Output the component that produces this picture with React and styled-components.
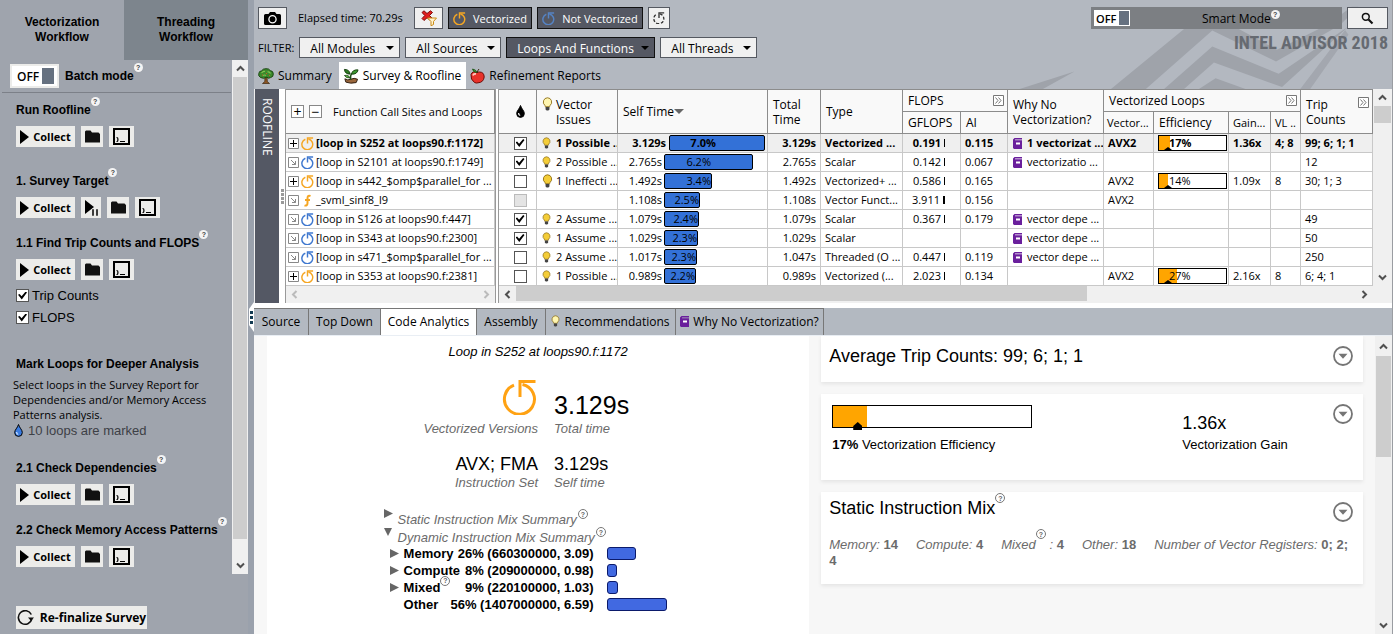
import { useState } from "react";
import styled, { createGlobalStyle, css } from "styled-components";

const UI_FONT = `"Open Sans", "Noto Sans", sans-serif`;
const DOC_FONT = `"Liberation Sans", Arial, sans-serif`;

const ORANGE = "#f5a623";
const BLUE = "#3f78cf";

const ROWS = [
  { name: "[loop in S252 at loops90.f:1172]", kind: "vector", open: true, check: "on", issue: "1 Possible ..", self: "3.129s", pct: "7.0%", bar: 96, total: "3.129s", type: "Vectorized ...", gflops: "0.191", ai: "0.115", why: "1 vectorizat ...", isa: "AVX2", eff: 17, gain: "1.36x", vl: "4; 8", trips: "99; 6; 1; 1" },
  { name: "[loop in S2101 at loops90.f:1749]", kind: "scalar", check: "on", issue: "2 Possible ...", self: "2.765s", pct: "6.2%", bar: 89, total: "2.765s", type: "Scalar", gflops: "0.142", ai: "0.067", why: "vectorizatio ...", trips: "12" },
  { name: "[loop in s442_$omp$parallel_for ...", kind: "vector", open: true, check: "off", issue: "1 Ineffecti ...", self: "1.492s", pct: "3.4%", bar: 48, total: "1.492s", type: "Vectorized+ ...", gflops: "0.586", ai: "0.165", isa: "AVX2", eff: 14, gain: "1.09x", vl: "8", trips: "30; 1; 3" },
  { name: "_svml_sinf8_l9", kind: "func", check: "disabled", self: "1.108s", pct: "2.5%", bar: 36, total: "1.108s", type: "Vector Funct...", gflops: "3.911", ai: "0.156", isa: "AVX2" },
  { name: "[loop in S126 at loops90.f:447]", kind: "scalar", check: "on", issue: "2 Assume ...", self: "1.079s", pct: "2.4%", bar: 35, total: "1.079s", type: "Scalar", gflops: "0.367", ai: "0.179", why: "vector depe ...", trips: "49" },
  { name: "[loop in S343 at loops90.f:2300]", kind: "scalar", check: "on", issue: "1 Assume ...", self: "1.029s", pct: "2.3%", bar: 34, total: "1.029s", type: "Scalar", why: "vector depe ...", trips: "50" },
  { name: "[loop in s471_$omp$parallel_for ...", kind: "scalar", check: "off", issue: "2 Assume ...", self: "1.017s", pct: "2.3%", bar: 33, total: "1.047s", type: "Threaded (O ...", gflops: "0.447", ai: "0.119", why: "vector depe ...", trips: "250" },
  { name: "[loop in S353 at loops90.f:2381]", kind: "vector", open: true, check: "off", issue: "1 Possible ...", self: "0.989s", pct: "2.2%", bar: 32, total: "0.989s", type: "Vectorized (...", gflops: "2.023", ai: "0.134", isa: "AVX2", eff: 27, gain: "2.16x", vl: "8", trips: "6; 4; 1" },
];

const COLUMNS = [38, 81, 150, 53, 82, 58, 47, 96, 50, 75, 42, 30];

const MIX = [
  { name: "Memory", value: "26% (660300000, 3.09)", bar: 29, more: true },
  { name: "Compute", value: "8% (209000000, 0.98)", bar: 10, more: true },
  { name: "Mixed", value: "9% (220100000, 1.03)", bar: 11, more: true, help: true },
  { name: "Other", value: "56% (1407000000, 6.59)", bar: 60 },
];

/* icons */

const LoopIcon = ({ size = 13, color = ORANGE, width = 3, dashed }) => (
  <svg width={size} height={size} viewBox="0 0 35 36" fill="none" stroke={color} strokeWidth={width}>
    <path d="M20 5.5 A15 15 0 1 1 11.5 6.2" strokeDasharray={dashed ? "9 5" : undefined} />
    <path d="M17.5 18 V2.5 H33" />
  </svg>
);

const FuncIcon = () => (
  <svg width="13" height="13" viewBox="0 0 13 13" fill="none" stroke={ORANGE} strokeWidth="2">
    <path d="M9.5 2 C7 1 6.5 2.5 6.5 4.5 V9 C6.5 11.5 5 12 3.5 11.3 M4 6 H9" />
  </svg>
);

const BulbIcon = ({ big, lit }) => (
  <svg width={big ? 11 : 9} height={big ? 14 : 12} viewBox="0 0 10 13">
    <path d="M5 .7 A4 4 0 0 1 7.4 7.8 L7 9 H3 L2.6 7.8 A4 4 0 0 1 5 .7z" fill={lit ? "#fff6b0" : "#f4cd38"} stroke="#8a6a10" strokeWidth=".8" />
    <path d="M3.2 9.3 H6.8 V11.5 L5.8 12.6 H4.2 L3.2 11.5z" fill="#444" />
  </svg>
);

const BookIcon = () => (
  <svg width="9" height="11" viewBox="0 0 9 11">
    <path d="M1.5 0 H9 V1.5 H2 V2.3 H9 V11 H1 L0 10 V1.5z" fill="#6a1f9c" />
    <path d="M3 4.5 H7 V6.5 H3z" fill="#fff" />
  </svg>
);

const DropIcon = ({ color = "#000", shine }) => (
  <svg width="9" height="13" viewBox="0 0 9 13">
    <path d="M4.5 .5 C5.5 4 8.3 5.7 8.3 8.6 A3.8 3.8 0 0 1 .7 8.6 C.7 5.7 3.5 4 4.5 .5z" fill={color} stroke="#000" />
    <path d="M2.6 8 C2.5 9.5 3.3 10.3 4.2 10.5" fill="none" stroke={shine || "#fff"} strokeWidth="1.2" />
  </svg>
);

const PlayIcon = () => (
  <svg width="9" height="14" viewBox="0 0 9 14"><path d="M0 0 L9 7 L0 14z" /></svg>
);

const PlayPauseIcon = () => (
  <svg width="13" height="16" viewBox="0 0 13 16">
    <path d="M0 0 L9 7 L0 14z" />
    <path d="M7 9 H9 V16 H7z M11 9 H13 V16 H11z" stroke="#ececea" strokeWidth=".5" />
  </svg>
);

const FolderIcon = () => (
  <svg width="15" height="13" viewBox="0 0 15 13"><path d="M0 1.5 L1 .5 H5.5 L7 2.5 H13.5 L15 4 V12.5 H0z" fill="#111" /></svg>
);

const TerminalIcon = () => (
  <svg width="17" height="17" viewBox="0 0 17 17" fill="none" stroke="#000">
    <path d="M1 1 H16 V16 H1z" strokeWidth="2" />
    <path d="M3.5 9.5 Q5 9.5 4.8 11 Q5.2 11.5 4.8 12 Q5 13.5 3.5 13.5 M7 13.5 H12" strokeWidth="1.2" />
  </svg>
);

const RefreshIcon = () => (
  <svg width="17" height="16" viewBox="0 0 17 16">
    <path d="M14.3 4.5 A6.8 6.8 0 1 0 14.8 9" fill="none" stroke="#111" strokeWidth="1.6" />
    <path d="M11 7.5 H17 L14 11z" fill="#111" />
  </svg>
);

const CameraIcon = () => (
  <svg width="17" height="13" viewBox="0 0 17 13">
    <path d="M1.5 2 H4.5 L6 0 H11 L12.5 2 H15.5 Q17 2 17 3.5 V11.5 Q17 13 15.5 13 H1.5 Q0 13 0 11.5 V3.5 Q0 2 1.5 2z" />
    <circle cx="8.5" cy="7.2" r="3.6" fill="none" stroke="#fff" strokeWidth="1.3" />
  </svg>
);

const ClearFilterIcon = () => (
  <svg width="16" height="16" viewBox="0 0 16 16">
    <path d="M1 2.5 L3 .8 L6 3.5 L9.5 .8 L11.5 2.5 L8.5 5.5 L11.5 8.5 L9.5 10.5 L6 7.8 L3 10.5 L1 8.5 L3.8 5.5z" fill="#e01f1f" stroke="#7d0b0b" />
    <path d="M6.5 8 H15.5 L12.5 11.5 V14.5 L10 15.8 V11.5z" fill="#fff3cf" stroke="#c98a17" />
  </svg>
);

const SearchIcon = () => (
  <svg width="13" height="13" viewBox="0 0 13 13" fill="none" stroke="#111">
    <circle cx="4.8" cy="4.8" r="3.4" strokeWidth="1.5" />
    <path d="M7.5 7.5 L11.5 11.5" strokeWidth="2.2" />
  </svg>
);

const TreeIcon = () => (
  <svg width="16" height="16" viewBox="0 0 16 16">
    <path d="M7 8 H9 L9.3 13.5 L11.5 15.5 H4.5 L6.8 13.5z" fill="#8b5523" stroke="#3d2610" strokeWidth=".7" />
    <path d="M2.5 9.5 Q0 8 .8 5.5 Q1 3 3.6 2.8 Q5 .5 8 .7 Q11 .4 12.2 2.6 Q15.4 3 15.3 6 Q15.5 9 12.5 9.6 Q10.5 11 8.8 9.2 Q5.5 11.3 2.5 9.5z" fill="#3c8a2c" stroke="#16400f" strokeWidth=".9" />
    <path d="M3.5 5 Q5 3 7 3.5 M9.5 4 Q11.5 3.5 12.5 5.5 M5 7.5 Q6.5 6.5 8 7.5" fill="none" stroke="#82c552" strokeWidth="1.2" />
    <path d="M4 7 h1 M8 5.5 h1 M11 7.5 h1" stroke="#c4572c" strokeWidth="1.2" />
  </svg>
);

const SproutIcon = () => (
  <svg width="16" height="16" viewBox="0 0 17 16">
    <path d="M2 11 Q5 13 8 11.5 Q12 9.5 15.5 11.5 L14 15 Q8 16.5 3 14.5z" fill="#9a673d" stroke="#2b1a0c" />
    <path d="M8 12 Q7.5 8 9 5.5" fill="none" stroke="#1f4d17" strokeWidth="1.6" />
    <path d="M9 6 Q10 1 16 1.5 Q15 6.5 9 6z" fill="#3f9a31" stroke="#123b0c" />
    <path d="M7.5 6 Q7 1 1.5 1 Q2 6 7.5 6z" fill="#2f7d25" stroke="#123b0c" />
    <path d="M7.5 10 Q3 10.5 1.5 7.5 Q6 6.5 7.5 10z" fill="#57ad3f" stroke="#123b0c" strokeWidth=".8" />
  </svg>
);

const AppleIcon = () => (
  <svg width="15" height="16" viewBox="0 0 15 16">
    <path d="M7 4.5 Q2.5 2.5 1 6.5 Q.3 11.5 4.5 14.5 Q6.5 15.5 8 14.8 Q13.5 14.5 14.2 9 Q14 4 9.5 4 Q8 4 7 4.5z" fill="#e8322a" stroke="#6e0e0a" />
    <path d="M3 7.5 Q3.5 5.5 6 6" fill="none" stroke="#ffc9c0" strokeWidth="1.8" />
    <path d="M7 4.5 Q6 1.5 2.5 1 Q3 4.5 7 4.5z" fill="#45a034" stroke="#174a10" strokeWidth=".8" />
    <path d="M7.2 5 Q7.5 2.5 9 1" fill="none" stroke="#3d2610" />
  </svg>
);

const Chevron = ({ dir = "up", color = "#505050" }) => {
  const angle = { up: 0, right: 90, down: 180, left: 270 }[dir];
  return (
    <svg width="9" height="9" viewBox="0 0 9 9" fill="none" stroke={color} strokeWidth="2">
      <path d="M1 6.5 L4.5 3 L8 6.5" transform={`rotate(${angle} 4.5 4.5)`} />
    </svg>
  );
};

const Caret = ({ color = "#000", size = 8 }) => (
  <svg width={size} height={size / 2} viewBox="0 0 8 4"><path d="M0 0 H8 L4 4z" fill={color} /></svg>
);

const ExpandIcon = () => (
  <svg width="11" height="11" viewBox="0 0 11 11" fill="none" stroke="#777">
    <path d="M.5 .5 H10.5 V10.5 H.5z" fill="#fff" />
    <path d="M2.5 2.5 L5 5.5 L2.5 8.5 M5.5 2.5 L8 5.5 L5.5 8.5" />
  </svg>
);

const RowToggleIcon = ({ open }) => (
  <svg width="11" height="11" viewBox="0 0 11 11" fill="none" stroke={open ? "#000" : "#888"}>
    <path d="M.5 .5 H10.5 V10.5 H.5z" fill="#fff" stroke="#888" />
    {open ? <path d="M2 5.5 H9 M5.5 2 V9" /> : <path d="M3 3 L7.5 7.5 M7.5 4 V7.5 H4" />}
  </svg>
);

const CircleDown = () => (
  <svg width="20" height="20" viewBox="0 0 20 20">
    <circle cx="10" cy="10" r="9" fill="#fff" stroke="#757575" strokeWidth="1.8" />
    <path d="M5.5 7.8 H14.5 L10 12.8z" fill="#757575" />
  </svg>
);

const Disclosure = ({ open }) => (
  <svg width="9" height="9" viewBox="0 0 9 9"><path d={open ? "M0 1 H8 L4 9z" : "M0 0 L9 4.5 L0 9z"} fill="#666" /></svg>
);

const Backdrop = () => (
  <BackdropSvg width="393" height="89" viewBox="0 0 1179 268" fill="#9fa3aa">
    <path d="M335 268 L555 87 L620 50 L720 87 L835 150 L985 75 L1060 20 L1080 20 L1025 75 L832 185 L640 92 L440 268z" />
    <path d="M495 268 L640 140 L840 222 L1050 80 L850 262 L645 188 L555 268z" />
    <path d="M600 268 L650 236 L740 268z" />
    <path d="M905 268 L1040 90 L1050 105 L935 268z" opacity=".8" />
    <path d="M60 268 L225 215 L130 268z" />
  </BackdropSvg>
);

const Help = ({ outline }) => <HelpMark $outline={outline}>?</HelpMark>;

/* left workflow */

const CollectRow = ({ pause }) => (
  <Actions>
    <CollectButton type="button"><PlayIcon />Collect</CollectButton>
    {pause && <SquareButton type="button" aria-label="Start paused" $w={20}><PlayPauseIcon /></SquareButton>}
    <SquareButton type="button" aria-label="Open folder" $w={22}><FolderIcon /></SquareButton>
    <SquareButton type="button" aria-label="Command line" $w={25}><TerminalIcon /></SquareButton>
  </Actions>
);

const Step = ({ title, pause, gap, children }) => (
  <StepWrap $gap={gap}>
    <StepTitle>{title}<Help /></StepTitle>
    <CollectRow pause={pause} />
    {children}
  </StepWrap>
);

const Workflow = () => (
  <Sidebar>
    <FlowTabs>
      <FlowTab type="button" $active>Vectorization<br />Workflow</FlowTab>
      <FlowTab type="button">Threading<br />Workflow</FlowTab>
    </FlowTabs>
    <FlowBody>
      <FlowContent>
        <Batch>
          <Toggle type="button" role="switch" aria-checked="false" aria-label="Batch mode">OFF<i /></Toggle>
          <StepTitle>Batch mode<Help /></StepTitle>
        </Batch>
        <Step title="Run Roofline" gap={9} />
        <Step title="1. Survey Target" gap={26} pause />
        <Step title="1.1 Find Trip Counts and FLOPS" gap={17}>
          <CheckLabel><Check defaultChecked />Trip Counts</CheckLabel>
          <CheckLabel><Check defaultChecked />FLOPS</CheckLabel>
        </Step>
        <StepWrap $gap={32}>
          <StepTitle>Mark Loops for Deeper Analysis</StepTitle>
          <Hint>Select loops in the Survey Report for Dependencies and/or Memory Access Patterns analysis.</Hint>
          <Marked><DropIcon color="#3a7be0" shine="#cfe4ff" />10 loops are marked</Marked>
        </StepWrap>
        <Step title="2.1 Check Dependencies" gap={21} />
        <Step title="2.2 Check Memory Access Patterns" gap={17} />
      </FlowContent>
      <VScroll $w={16}>
        <ScrollEnd><Chevron dir="up" /></ScrollEnd>
        <VThumb $grow />
        <ScrollEnd><Chevron dir="down" /></ScrollEnd>
      </VScroll>
    </FlowBody>
    <FlowFooter>
      <CollectButton type="button" $wide><RefreshIcon />Re-finalize Survey</CollectButton>
    </FlowFooter>
  </Sidebar>
);

/* toolbar */

const Filter = ({ label, width, dark }) => (
  <FilterWrap $w={width} $dark={dark}>
    <select aria-label={label}><option>{label}</option></select>
    <Caret />
  </FilterWrap>
);

const Toolbar = () => (
  <Top>
    <Backdrop />
    <ToolRow>
      <ToolButton type="button" aria-label="Snapshot" $w={29}><CameraIcon /></ToolButton>
      <Elapsed>Elapsed time: 70.29s</Elapsed>
      <ToolButton type="button" aria-label="Clear filters" $w={29}><ClearFilterIcon /></ToolButton>
      <ToolButton type="button" $dark $w={84}><LoopIcon width={4} />Vectorized</ToolButton>
      <ToolButton type="button" $dark $w={106}><LoopIcon width={4} color="#5583c4" />Not Vectorized</ToolButton>
      <ToolButton type="button" aria-label="All loops" $w={22}><LoopIcon size={12} color="#333" width={4} dashed /></ToolButton>
      <SmartMode>
        <Toggle type="button" role="switch" aria-checked="false" aria-label="Smart mode" $small>OFF<i /></Toggle>
        <span>Smart Mode<Help /></span>
      </SmartMode>
      <ToolButton type="button" aria-label="Search" $w={41}><SearchIcon /></ToolButton>
    </ToolRow>
    <FilterRow>
      <span>FILTER:</span>
      <Filter label="All Modules" width={101} />
      <Filter label="All Sources" width={96} />
      <Filter label="Loops And Functions" width={149} dark />
      <Filter label="All Threads" width={97} />
      <Brand>INTEL ADVISOR 2018</Brand>
    </FilterRow>
    <ViewTabs>
      <ViewTab type="button"><TreeIcon />Summary</ViewTab>
      <ViewTab type="button" $active><SproutIcon />Survey &amp; Roofline</ViewTab>
      <ViewTab type="button"><AppleIcon />Refinement Reports</ViewTab>
    </ViewTabs>
  </Top>
);

/* survey grid */

const KindIcon = ({ kind }) => {
  if (kind === "func") return <FuncIcon />;
  return <LoopIcon width={4} color={kind === "vector" ? ORANGE : BLUE} />;
};

const SitesPane = () => (
  <Sites>
    <Table>
      <thead>
        <tr>
          <Th $tall>
            <SitesHead>
              <MiniButton type="button" aria-label="Expand all">+</MiniButton>
              <MiniButton type="button" aria-label="Collapse all">−</MiniButton>
              <span>Function Call Sites and Loops</span>
            </SitesHead>
          </Th>
        </tr>
      </thead>
      <tbody>
        {ROWS.map((row, i) => (
          <Tr key={row.name} $selected={i === 0}>
            <Td $pad={2}>
              <Inline $gap={2}><RowToggleIcon open={row.open} /><KindIcon kind={row.kind} /><span>{row.name}</span></Inline>
            </Td>
          </Tr>
        ))}
      </tbody>
    </Table>
    <HScroll>
      <HEnd><Chevron dir="left" color="#bbb" /></HEnd>
      <Space />
      <HEnd><Chevron dir="right" color="#bbb" /></HEnd>
    </HScroll>
  </Sites>
);

const MetricsPane = () => (
  <Metrics>
    <MetricsBody>
      <Table>
        <colgroup>
          {COLUMNS.map((w, i) => <Col key={i} $w={w} />)}
          <col />
        </colgroup>
        <thead>
          <tr>
            <Th rowSpan="2" aria-label="Marked"><Inline $center><DropIcon /></Inline></Th>
            <Th rowSpan="2"><Inline $gap={3} $top><BulbIcon big lit /><span>Vector<br />Issues</span></Inline></Th>
            <Th rowSpan="2"><Inline>Self Time<Caret color="#666" size={10} /></Inline></Th>
            <Th rowSpan="2">Total<br />Time</Th>
            <Th rowSpan="2">Type</Th>
            <Th colSpan="2"><Spread>FLOPS<ExpandIcon /></Spread></Th>
            <Th rowSpan="2">Why No<br />Vectorization?</Th>
            <Th colSpan="4"><Spread>Vectorized Loops<ExpandIcon /></Spread></Th>
            <Th rowSpan="2"><Spread $top>Trip<br />Counts<ExpandIcon /></Spread></Th>
          </tr>
          <tr>
            <Th>GFLOPS</Th>
            <Th>AI</Th>
            <Th $pad={3}>Vector...</Th>
            <Th>Efficiency</Th>
            <Th $pad={4}>Gain...</Th>
            <Th $pad={4}>VL ..</Th>
          </tr>
        </thead>
        <tbody>
          {ROWS.map((row, i) => (
            <Tr key={row.name} $selected={i === 0}>
              <Td><Inline $center><Check defaultChecked={row.check === "on"} disabled={row.check === "disabled"} aria-label={`Mark ${row.name}`} /></Inline></Td>
              <Td>{row.issue && <Inline $gap={i === 2 ? 3 : 5}><BulbIcon big={i === 2} />{row.issue}</Inline>}</Td>
              <Td $pad={0}>
                <SelfTime>
                  <SelfValue $bold={i === 0}>{row.self}</SelfValue>
                  <TimeBar style={{ width: row.bar }}><span>{row.pct}</span></TimeBar>
                </SelfTime>
              </Td>
              <Td $right>{row.total}</Td>
              <Td $pad={4}>{row.type}</Td>
              <Td>{row.gflops && <Inline $gap={3} $end>{row.gflops}<Tick $wide={i === 3} /></Inline>}</Td>
              <Td $pad={4}>{row.ai}</Td>
              <Td>{row.why && <Inline $gap={5}><BookIcon />{row.why}</Inline>}</Td>
              <Td $pad={4}>{row.isa}</Td>
              <Td $pad={4}>
                {row.eff && (
                  <EffBar><i style={{ width: `${row.eff}%` }} /><b /><span>{row.eff}%</span></EffBar>
                )}
              </Td>
              <Td $pad={4}>{row.gain}</Td>
              <Td $pad={4}>{row.vl}</Td>
              <Td $pad={4}>{row.trips}</Td>
            </Tr>
          ))}
        </tbody>
      </Table>
      <VScroll $w={19}>
        <ScrollEnd><Chevron dir="up" /></ScrollEnd>
        <VThumb $h={17} />
        <Space />
        <ScrollEnd><Chevron dir="down" /></ScrollEnd>
      </VScroll>
    </MetricsBody>
    <HScroll>
      <HEnd><Chevron dir="left" /></HEnd>
      <HTrack><HThumb /></HTrack>
      <HEnd $wide><Chevron dir="right" /></HEnd>
    </HScroll>
  </Metrics>
);

/* code analytics */

const TABS = [
  { label: "Source", width: 55 },
  { label: "Top Down", width: 72 },
  { label: "Code Analytics", width: 96 },
  { label: "Assembly", width: 69 },
  { label: "Recommendations", width: 130, icon: <BulbIcon lit /> },
  { label: "Why No Vectorization?", width: 148, icon: <BookIcon /> },
];

const Analytics = () => (
  <Doc>
    <Gutter />
    <LoopPanel>
      <LoopTitle>Loop in S252 at loops90.f:1172</LoopTitle>
      <Stats>
        <Stat $right $first><LoopIcon size={36} width={3} color="#ffa213" /><em>Vectorized Versions</em></Stat>
        <Stat $first $big><strong>3.129s</strong><em>Total time</em></Stat>
        <Stat $right><strong>AVX; FMA</strong><em>Instruction Set</em></Stat>
        <Stat><strong>3.129s</strong><em>Self time</em></Stat>
      </Stats>
      <Mix>
        <MixHead><Disclosure /><span>Static Instruction Mix Summary</span><Help outline /></MixHead>
        <MixHead><Disclosure open /><span>Dynamic Instruction Mix Summary</span><Help outline /></MixHead>
        {MIX.map((m) => (
          <MixRow key={m.name}>
            <MixText>
              <MixArrow>{m.more && <Disclosure />}</MixArrow>
              <MixName>{m.name}{m.help && <Help outline />}</MixName>
              <span>{m.value}</span>
            </MixText>
            <MixBar style={{ width: m.bar }} />
          </MixRow>
        ))}
      </Mix>
    </LoopPanel>
    <Cards>
      <Card $h={46}>
        <CardTitle>Average Trip Counts: 99; 6; 1; 1</CardTitle>
        <RoundButton type="button" aria-label="Expand trip counts"><CircleDown /></RoundButton>
      </Card>
      <Card $h={86}>
        <Efficiency>
          <BigBar><i /><b /></BigBar>
          <p><b>17%</b> Vectorization Efficiency</p>
        </Efficiency>
        <Gain><strong>1.36x</strong><span>Vectorization Gain</span></Gain>
        <RoundButton type="button" aria-label="Expand efficiency"><CircleDown /></RoundButton>
      </Card>
      <Card $h={92} $tight>
        <MixCardBody>
          <CardTitle>Static Instruction Mix<Help outline /></CardTitle>
          <MixLine>
            <span><em>Memory:</em> <b>14</b></span>
            <span><em>Compute:</em> <b>4</b></span>
            <span><em>Mixed</em><Help outline /><em> :</em> <b>4</b></span>
            <span><em>Other:</em> <b>18</b></span>
            <em>Number of Vector Registers:</em> <b>0; 2;</b> <b>4</b>
          </MixLine>
        </MixCardBody>
        <RoundButton type="button" aria-label="Expand instruction mix" $low><CircleDown /></RoundButton>
      </Card>
    </Cards>
    <VScroll $w={17}>
      <ScrollEnd $tall><Chevron dir="up" /></ScrollEnd>
      <VThumb $h={101} />
      <Space />
      <ScrollEnd><Chevron dir="down" /></ScrollEnd>
    </VScroll>
  </Doc>
);

const App = () => {
  const [activeTab, setActiveTab] = useState("Code Analytics");

  return (
    <Page>
      <GlobalStyle />
      <Workflow />
      <Splitter>
        <svg width="6" height="30" viewBox="0 0 6 30">
          <path d="M6 0 L1 7 V23 L6 30z" fill="#fff" />
          <path d="M2 9 H5 V12 H2z M2 14 H5 V17 H2z M2 19 H5 V22 H2z" fill="#123a52" />
        </svg>
      </Splitter>
      <Main>
        <Toolbar />
        <Survey>
          <Roofline type="button">ROOFLINE</Roofline>
          <Grip><i /><i /><i /><i /></Grip>
          <SitesPane />
          <Divider />
          <MetricsPane />
        </Survey>
        <DocTabs>
          {TABS.map((tab) => (
            <DocTab key={tab.label} type="button" $w={tab.width} $active={tab.label === activeTab} onClick={() => setActiveTab(tab.label)}>
              {tab.icon}
              {tab.label}
            </DocTab>
          ))}
        </DocTabs>
        <Analytics />
      </Main>
    </Page>
  );
};

export default App;

const GlobalStyle = createGlobalStyle`
  * {
    box-sizing: border-box;
  }

  body {
    margin: 0;
    background: #fff;
    color: #000;
    font-family: ${UI_FONT};
    font-size: 12px;
    line-height: 15px;
  }

  button, select, input {
    margin: 0;
    padding: 0;
    border: 0;
    font: inherit;
    color: inherit;
  }

  svg {
    flex: none;
    display: block;
  }
`;

const Page = styled.div`
  display: flex;
  height: 100vh;
  min-height: 634px;
  overflow: hidden;
`;

const HelpMark = styled.sup`
  flex: none;
  display: inline-flex;
  align-items: center;
  justify-content: center;
  width: 9px;
  height: 9px;
  border-radius: 50%;
  background: #f4f4f4;
  color: #444;
  font: bold 7px ${DOC_FONT};
  vertical-align: 6px;

  ${(p) => p.$outline && css`
    border: 1px solid #777;
    width: 10px;
    height: 10px;
    background: #fff;
    color: #666;
  `}
`;

const Sidebar = styled.aside`
  flex: 0 0 248px;
  display: flex;
  flex-direction: column;
  background: #9fa4ad;
`;

const FlowTabs = styled.div`
  display: flex;
  flex: 0 0 60px;
`;

const FlowTab = styled.button`
  flex: 1;
  background: ${(p) => (p.$active ? "#9fa4ad" : "#7d858d")};
  font: bold 12px/15px ${DOC_FONT};
`;

const FlowBody = styled.div`
  flex: 0 0 514px;
  display: flex;
`;

const FlowContent = styled.div`
  flex: 1;
  min-width: 0;
  overflow: hidden;
`;

const Batch = styled.div`
  display: flex;
  align-items: center;
  gap: 6px;
  height: 33px;
  margin: 0 1px 0 2px;
  padding-left: 8px;
  border-bottom: 1px solid #7c8088;
`;

const Toggle = styled.button`
  display: flex;
  align-items: center;
  justify-content: space-between;
  width: 49px;
  height: 24px;
  padding: 0 3px 0 5px;
  border: 2px solid #ececea;
  background: #fff;
  font-weight: 600;

  i {
    width: 12px;
    height: 16px;
    background: #667180;
  }

  ${(p) => p.$small && css`
    width: 36px;
    height: 16px;
    padding: 0 0 0 2px;
    border: 0;
    font-size: 11px;

    i {
      width: 10px;
      height: 14px;
      margin-right: 1px;
    }
  `}
`;

const StepTitle = styled.h3`
  display: flex;
  margin: 0;
  font: bold 12px/16px ${DOC_FONT};
  white-space: nowrap;

  sup {
    margin-top: -5px;
  }
`;

const StepWrap = styled.section`
  padding: ${(p) => p.$gap}px 0 0 16px;
`;

const Actions = styled.div`
  display: flex;
  gap: 6px;
  height: 21px;
  margin-top: 8px;
`;

const CollectButton = styled.button`
  display: flex;
  align-items: center;
  justify-content: center;
  gap: ${(p) => (p.$wide ? 6 : 4)}px;
  width: ${(p) => (p.$wide ? 131 : 59)}px;
  height: ${(p) => (p.$wide ? 23 : 21)}px;
  background: #ececea;
  font-size: ${(p) => (p.$wide ? 12 : 11)}px;
  font-weight: 700;
  white-space: nowrap;
`;

const SquareButton = styled.button`
  display: flex;
  align-items: center;
  justify-content: center;
  width: ${(p) => p.$w}px;
  background: #ececea;
`;

const CheckLabel = styled.label`
  display: flex;
  align-items: center;
  gap: 3px;
  height: 13px;
  margin-top: 9px;
  font: 13px/13px ${DOC_FONT};
`;

const Check = styled.input.attrs({ type: "checkbox" })`
  appearance: none;
  flex: none;
  display: grid;
  place-items: center;
  width: 13px;
  height: 13px;
  border: 1px solid #555;
  background: #fff;

  &:checked::before {
    content: "";
    width: 9px;
    height: 8px;
    background: #000;
    clip-path: polygon(0 40%, 18% 30%, 40% 60%, 85% 0, 100% 14%, 42% 100%);
  }

  &:disabled {
    border-color: #bbb;
    background: #e4e4e4;
  }
`;

const Hint = styled.p`
  margin: 5px 10px 0 -3px;
  font-size: 11px;
`;

const Marked = styled.div`
  display: flex;
  align-items: center;
  gap: 5px;
  height: 17px;
  margin-left: -2px;
  color: #3d4046;
  font: 13px/16px ${DOC_FONT};
`;

const FlowFooter = styled.div`
  padding: 32px 0 0 16px;
`;

const VScroll = styled.div`
  flex: 0 0 ${(p) => p.$w}px;
  display: flex;
  flex-direction: column;
  background: #f0f0f0;
`;

const ScrollEnd = styled.div`
  flex: 0 0 ${(p) => (p.$tall ? 20 : 17)}px;
  display: flex;
  align-items: center;
  justify-content: center;
`;

const VThumb = styled.div`
  flex: ${(p) => (p.$grow ? "1" : `0 0 ${p.$h}px`)};
  margin: 0 1px ${(p) => (p.$grow ? 18 : 0)}px;
  background: #cdcdcd;
`;

const Splitter = styled.div`
  flex: 0 0 6px;
  display: flex;
  align-items: center;
  background: #9aa1ac;
`;

const Main = styled.main`
  flex: 1;
  min-width: 0;
  display: flex;
  flex-direction: column;
  border-right: 1px solid #9a9da2;
`;

const Top = styled.header`
  position: relative;
  flex: 0 0 89px;
  padding: 7px 4px 0 4px;
  background: #b3b8c0;
`;

const BackdropSvg = styled.svg`
  position: absolute;
  right: 0;
  bottom: 0;
`;

const ToolRow = styled.div`
  position: relative;
  display: flex;
  gap: 5px;
  height: 22px;
`;

const ToolButton = styled.button`
  display: flex;
  align-items: center;
  justify-content: center;
  gap: 7px;
  flex: 0 0 ${(p) => p.$w}px;
  border: 1px solid ${(p) => (p.$dark ? "#111" : "#555961")};
  background: ${(p) => (p.$dark ? "#555863" : "#f0f0f0")};
  color: ${(p) => (p.$dark ? "#fff" : "#000")};
  font-size: 11px;
  white-space: nowrap;
`;

const Elapsed = styled.span`
  flex: 0 0 117px;
  padding-left: 6px;
  font-size: 11px;
  line-height: 22px;
  white-space: nowrap;
`;

const SmartMode = styled.div`
  flex: 0 0 251px;
  display: flex;
  align-items: center;
  margin-left: auto;
  padding-left: 3px;
  background: #7c7f83;

  > span {
    flex: 1;
    padding-left: 72px;
  }
`;

const FilterRow = styled.div`
  position: relative;
  display: flex;
  gap: 5px;
  height: 21px;
  margin-top: 8px;
  line-height: 21px;

  > span {
    flex: 0 0 36px;
    font-size: 11px;
  }
`;

const FilterWrap = styled.div`
  display: flex;
  align-items: center;
  flex: 0 0 ${(p) => p.$w}px;
  padding-right: 5px;
  border: 1px solid ${(p) => (p.$dark ? "#111" : "#555961")};
  background: ${(p) => (p.$dark ? "#555863" : "#f0f0f0")};
  color: ${(p) => (p.$dark ? "#fff" : "#000")};

  select {
    flex: 1;
    min-width: 0;
    height: 19px;
    padding-left: 10px;
    appearance: none;
    background: transparent;
  }
`;

const Brand = styled.strong`
  margin-left: auto;
  color: #666a71;
  font: bold 18px/12px "Liberation Sans Narrow", "Roboto Condensed", "Liberation Sans", sans-serif;
  white-space: nowrap;
`;

const ViewTabs = styled.div`
  position: relative;
  display: flex;
  height: 27px;
  margin: 4px 0 0 -4px;
`;

const ViewTab = styled.button`
  display: flex;
  align-items: center;
  gap: 4px;
  padding: 0 ${(p) => (p.$active ? 5 : 7)}px 0 4px;
  background: ${(p) => (p.$active ? "#fff" : "transparent")};
  white-space: nowrap;
`;

const Survey = styled.section`
  flex: 0 0 214px;
  display: flex;
  background: #fff;
`;

const Roofline = styled.button`
  flex: 0 0 25px;
  padding-top: 9px;
  border-left: 1px solid #eee;
  background: #545864;
  color: #fff;
  text-align: left;
  writing-mode: vertical-rl;
`;

const Grip = styled.div`
  flex: 0 0 6px;
  display: flex;
  flex-direction: column;
  align-items: center;
  justify-content: center;
  gap: 1px;

  i {
    width: 3px;
    height: 3px;
    background: #999;
  }
`;

const Divider = styled.div`
  flex: 0 0 4px;
  border: 1px solid #999;
  border-width: 0 1px;
`;

const Sites = styled.div`
  flex: 0 0 210px;
  display: flex;
  flex-direction: column;
  min-width: 0;
  border-left: 1px solid #999;
`;

const Metrics = styled.div`
  flex: 1;
  min-width: 0;
  display: flex;
  flex-direction: column;
`;

const MetricsBody = styled.div`
  display: flex;
`;

const Table = styled.table`
  width: 100%;
  table-layout: fixed;
  border-collapse: separate;
  border-spacing: 0;
  border-top: 1px solid #8c8c8c;
`;

const Col = styled.col`
  width: ${(p) => p.$w}px;
`;

const Th = styled.th`
  height: ${(p) => (p.$tall ? 44 : 22)}px;
  padding: 0 0 0 ${(p) => p.$pad ?? 5}px;
  border: 1px solid #8c8c8c;
  border-width: 0 1px 1px 0;
  background: #f9f9f9;
  font-size: ${(p) => (p.$tall || p.$pad ? 11 : 12)}px;
  font-weight: 400;
  text-align: left;
  white-space: nowrap;
  overflow: hidden;
`;

const Tr = styled.tr`
  background: ${(p) => (p.$selected ? "#efefef" : "#fff")};
  font-weight: ${(p) => (p.$selected ? 700 : 400)};
`;

const Td = styled.td`
  height: 19px;
  padding: 0 0 0 ${(p) => p.$pad ?? 5}px;
  border: 1px solid #c8c8c8;
  border-width: 0 1px 1px 0;
  font-size: 11px;
  line-height: 16px;
  text-align: ${(p) => (p.$right ? "right" : "left")};
  white-space: nowrap;
  overflow: hidden;
  ${(p) => p.$right && "padding-right: 4px;"}
`;

const Inline = styled.div`
  display: flex;
  align-items: ${(p) => (p.$top ? "flex-start" : "center")};
  justify-content: ${(p) => (p.$center ? "center" : p.$end ? "flex-end" : "flex-start")};
  gap: ${(p) => p.$gap || 0}px;
  ${(p) => p.$end && "padding-right: 15px;"}
`;

const Spread = styled.div`
  display: flex;
  align-items: ${(p) => (p.$top ? "flex-start" : "center")};
  justify-content: space-between;
  padding-right: 3px;
`;

const SitesHead = styled.div`
  display: flex;
  align-items: center;
  gap: 5px;

  span {
    padding-left: 6px;
  }
`;

const MiniButton = styled.button`
  width: 13px;
  height: 13px;
  border: 1px solid #888;
  background: #fff;
  font-size: 14px;
  line-height: 10px;
`;

const SelfTime = styled.div`
  display: flex;
  align-items: center;
`;

const SelfValue = styled.span`
  flex: 0 0 ${(p) => (p.$bold ? 51 : 46)}px;
  padding-right: ${(p) => (p.$bold ? 3 : 2)}px;
  text-align: right;
`;

const TimeBar = styled.div`
  height: 16px;
  border: 1px solid #000;
  border-radius: 2px;
  background: #3371d7;
  line-height: 14px;

  span {
    display: block;
    max-width: 46px;
    text-align: right;
  }
`;

const Tick = styled.i`
  width: ${(p) => (p.$wide ? 2 : 1)}px;
  height: 8px;
  background: #000;
`;

const EffBar = styled.div`
  position: relative;
  display: flex;
  width: 69px;
  height: 16px;
  border: 1px solid #000;
  background: #fff;
  line-height: 14px;

  i {
    background: #ffa500;
  }

  b {
    position: absolute;
    left: 5px;
    bottom: 0;
    border: 4px solid transparent;
    border-bottom: 3px solid #000;
    border-top: 0;
  }

  span {
    position: absolute;
    left: 10px;
  }
`;

const HScroll = styled.div`
  flex: 1;
  display: flex;
  background: #f0f0f0;
`;

const HEnd = styled.div`
  flex: 0 0 17px;
  display: flex;
  align-items: center;
  justify-content: center;
  ${(p) => p.$wide && "margin-right: 19px;"}
`;

const Space = styled.div`
  flex: 1;
`;

const HTrack = styled.div`
  flex: 1;
`;

const HThumb = styled.div`
  width: 68%;
  height: 15px;
  background: #cdcdcd;
`;

const DocTabs = styled.div`
  flex: 0 0 32px;
  display: flex;
  border-top: 5px solid #fff;
  background: #b3b9c1;
`;

const DocTab = styled.button`
  display: flex;
  align-items: center;
  justify-content: center;
  gap: 4px;
  flex: 0 0 ${(p) => p.$w}px;
  padding-bottom: 2px;
  border-top: 1px solid #777;
  border-right: 1px solid #777;
  background: ${(p) => (p.$active ? "#fff" : "transparent")};
  white-space: nowrap;
`;

const Doc = styled.section`
  flex: 1;
  min-height: 0;
  display: flex;
  border-top: 1px solid #e9eef4;
  background: #f7f7f7;
  font: 13px/16px ${DOC_FONT};
`;

const Gutter = styled.div`
  flex: 0 0 13px;
`;

const LoopPanel = styled.div`
  flex: 0 0 48%;
  padding-top: 8px;
  border-right: 4px solid #f7f7f7;
  background: #fff;
`;

const LoopTitle = styled.p`
  margin: 0;
  text-align: center;
  font-style: italic;
`;

const Stats = styled.div`
  display: grid;
  grid-template-columns: 1fr 1fr;
  column-gap: 16px;
  padding: 18px 0 0 16px;
`;

const Stat = styled.div`
  display: flex;
  flex-direction: column;
  align-items: ${(p) => (p.$right ? "flex-end" : "flex-start")};
  justify-content: flex-end;
  height: ${(p) => (p.$first ? 60 : 54)}px;

  strong {
    font-size: ${(p) => (p.$big ? 25 : 18)}px;
    font-weight: 400;
    line-height: ${(p) => (p.$big ? 28 : 20)}px;
  }

  em {
    margin-top: ${(p) => (p.$first ? (p.$big ? 1 : 5) : 0)}px;
    color: #6b6b6b;
    line-height: 18px;
  }
`;

const Mix = styled.div`
  width: 309px;
  margin: 17px auto 0;
`;

const MixHead = styled.div`
  display: flex;
  gap: 5px;
  height: 18px;
  color: #6b6b6b;
  font-style: italic;

  span {
    padding-top: 3px;
  }

  sup {
    margin-left: -4px;
  }
`;

const MixRow = styled.div`
  display: flex;
  align-items: center;
  gap: 13px;
  height: 17px;
  font-weight: 700;
`;

const MixText = styled.div`
  flex: 0 0 210px;
  display: flex;
  white-space: nowrap;
`;

const MixArrow = styled.span`
  flex: 0 0 14px;
  padding-top: 3px;
  margin-left: 6px;
`;

const MixName = styled.span`
  flex: 1;

  sup {
    margin-top: -4px;
    vertical-align: top;
  }
`;

const MixBar = styled.span`
  height: 13px;
  border: 1px solid #0b1a6b;
  border-radius: 3px;
  background: #4169e1;
`;

const Cards = styled.div`
  flex: 1;
  min-width: 0;
  padding: 0 12px 0 8px;
`;

const Card = styled.article`
  display: flex;
  justify-content: space-between;
  min-height: ${(p) => p.$h}px;
  margin-bottom: 12px;
  padding: ${(p) => (p.$tight ? 3 : 7)}px 10px 0 8px;
  background: #fff;
  box-shadow: 0 2px 4px rgba(0, 0, 0, 0.08);
`;

const CardTitle = styled.h2`
  display: flex;
  margin: 0;
  font-size: 18px;
  font-weight: 400;
  line-height: 26px;

  sup {
    margin-top: -2px;
  }
`;

const RoundButton = styled.button`
  flex: none;
  width: 20px;
  height: 20px;
  margin-top: ${(p) => (p.$low ? 7 : 3)}px;
  border-radius: 50%;
  background: none;
`;

const Efficiency = styled.div`
  flex: 353;
  padding: 4px 0 0 3px;

  p {
    margin: 9px 0 0;
  }
`;

const BigBar = styled.div`
  position: relative;
  width: 200px;
  height: 23px;
  border: 1px solid #000;

  i {
    display: block;
    width: 17%;
    height: 100%;
    background: #ffa500;
  }

  b {
    position: absolute;
    left: 20px;
    bottom: -3px;
    width: 9px;
    height: 8px;
    background: #000;
    clip-path: polygon(50% 0, 100% 50%, 100% 100%, 0 100%, 0 50%);
  }
`;

const Gain = styled.div`
  flex: 152;
  display: flex;
  flex-direction: column;
  padding-top: 12px;

  strong {
    font-size: 18px;
    font-weight: 400;
    line-height: 20px;
  }

  span {
    margin-top: 4px;
  }
`;

const MixCardBody = styled.div`
  flex: 1;
  min-width: 0;
`;

const MixLine = styled.p`
  margin: 8px -20px 0 0;
  color: #6b6b6b;

  span {
    margin-right: 18px;
  }

  sup {
    vertical-align: 12px;
  }
`;
